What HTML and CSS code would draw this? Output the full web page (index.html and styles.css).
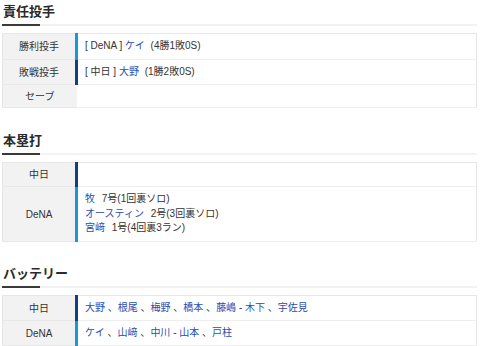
FILE: index.html
```html
<!DOCTYPE html>
<html lang="ja">
<head>
<meta charset="utf-8">
<link rel="stylesheet" href="styles.css">
</head>
<body>
<section class="sec">
  <h2 class="ttl">責任投手</h2>
  <table class="tbl">
    <tr class="h26"><th>勝利投手</th><td class="de">[ DeNA ] <a>ケイ</a> (4勝1敗0S)</td></tr>
    <tr class="h25"><th>敗戦投手</th><td class="cd">[ 中日 ] <a>大野</a> (1勝2敗0S)</td></tr>
    <tr class="h23"><th>セーブ</th><td></td></tr>
  </table>
</section>
<section class="sec">
  <h2 class="ttl">本塁打</h2>
  <table class="tbl">
    <tr class="h24"><th>中日</th><td class="cd"></td></tr>
    <tr class="h55"><th>DeNA</th><td class="de hr"><a>牧</a> 7号(1回裏ソロ)<br><a>オースティン</a> 2号(3回裏ソロ)<br><a>宮﨑</a> 1号(4回裏3ラン)</td></tr>
  </table>
</section>
<section class="sec">
  <h2 class="ttl">バッテリー</h2>
  <table class="tbl">
    <tr class="h25"><th>中日</th><td class="cd bt"><a>大野</a> 、<a>根尾</a> 、<a>梅野</a> 、<a>橋本</a> 、<a>藤嶋</a> - <a>木下</a> 、<a>宇佐見</a></td></tr>
    <tr class="h25"><th>DeNA</th><td class="de bt"><a>ケイ</a> 、<a>山﨑</a> 、<a>中川</a> - <a>山本</a> 、<a>戸柱</a></td></tr>
  </table>
</section>
</body>
</html>
```
FILE: styles.css
```css
html, body { margin: 0; padding: 0; background: #fff; }
body {
  font-family: "Liberation Sans", "Noto Sans CJK JP", sans-serif;
  color: #333;
  padding: 0 3px 0 2px;
}
.sec { margin-bottom: 21px; }
.sec + .sec { margin-bottom: 20px; }
.sec:last-child { margin-bottom: 0; }
.ttl {
  margin: 0 0 7px;
  font-size: 13px;
  font-weight: bold;
  line-height: 24px;
  height: 24px;
  padding-left: 1px;
  color: #2a2a2a;
  border-bottom: 2px solid #f2f2f2;
  position: relative;
}
.ttl::after {
  content: "";
  position: absolute;
  left: 0;
  bottom: -2px;
  width: 38px;
  height: 2px;
  background: #3a3a3a;
}
.tbl {
  width: 100%;
  border-collapse: collapse;
  border: 1px solid #e6e6e6;
  font-size: 10px;
  table-layout: fixed;
}
.tbl tr.h26 { height: 26px; }
.tbl tr.h25 { height: 25px; }
.tbl tr.h24 { height: 24px; }
.tbl tr.h23 { height: 23px; }
.tbl tr.h55 { height: 55px; }
.tbl th {
  width: 72px;
  background: #f2f2f2;
  font-weight: normal;
  color: #333;
  text-align: center;
  border-bottom: 1px solid #e8e8e8;
  padding: 0;
  line-height: 15px;
}
.tbl td {
  border-bottom: 1px solid #eeeeee;
  padding: 0 0 0 7px;
  line-height: 14.5px;
  color: #333;
}
.tbl td.de { border-left: 3px solid #1a96dc; }
.tbl td.cd { border-left: 3px solid #123f7e; }
.tbl a { color: #2a4db0; text-decoration: none; margin-right: 3px; }
.tbl td.hr a { margin-right: 4px; }
.tbl td.bt a { margin-right: 0; }
```
